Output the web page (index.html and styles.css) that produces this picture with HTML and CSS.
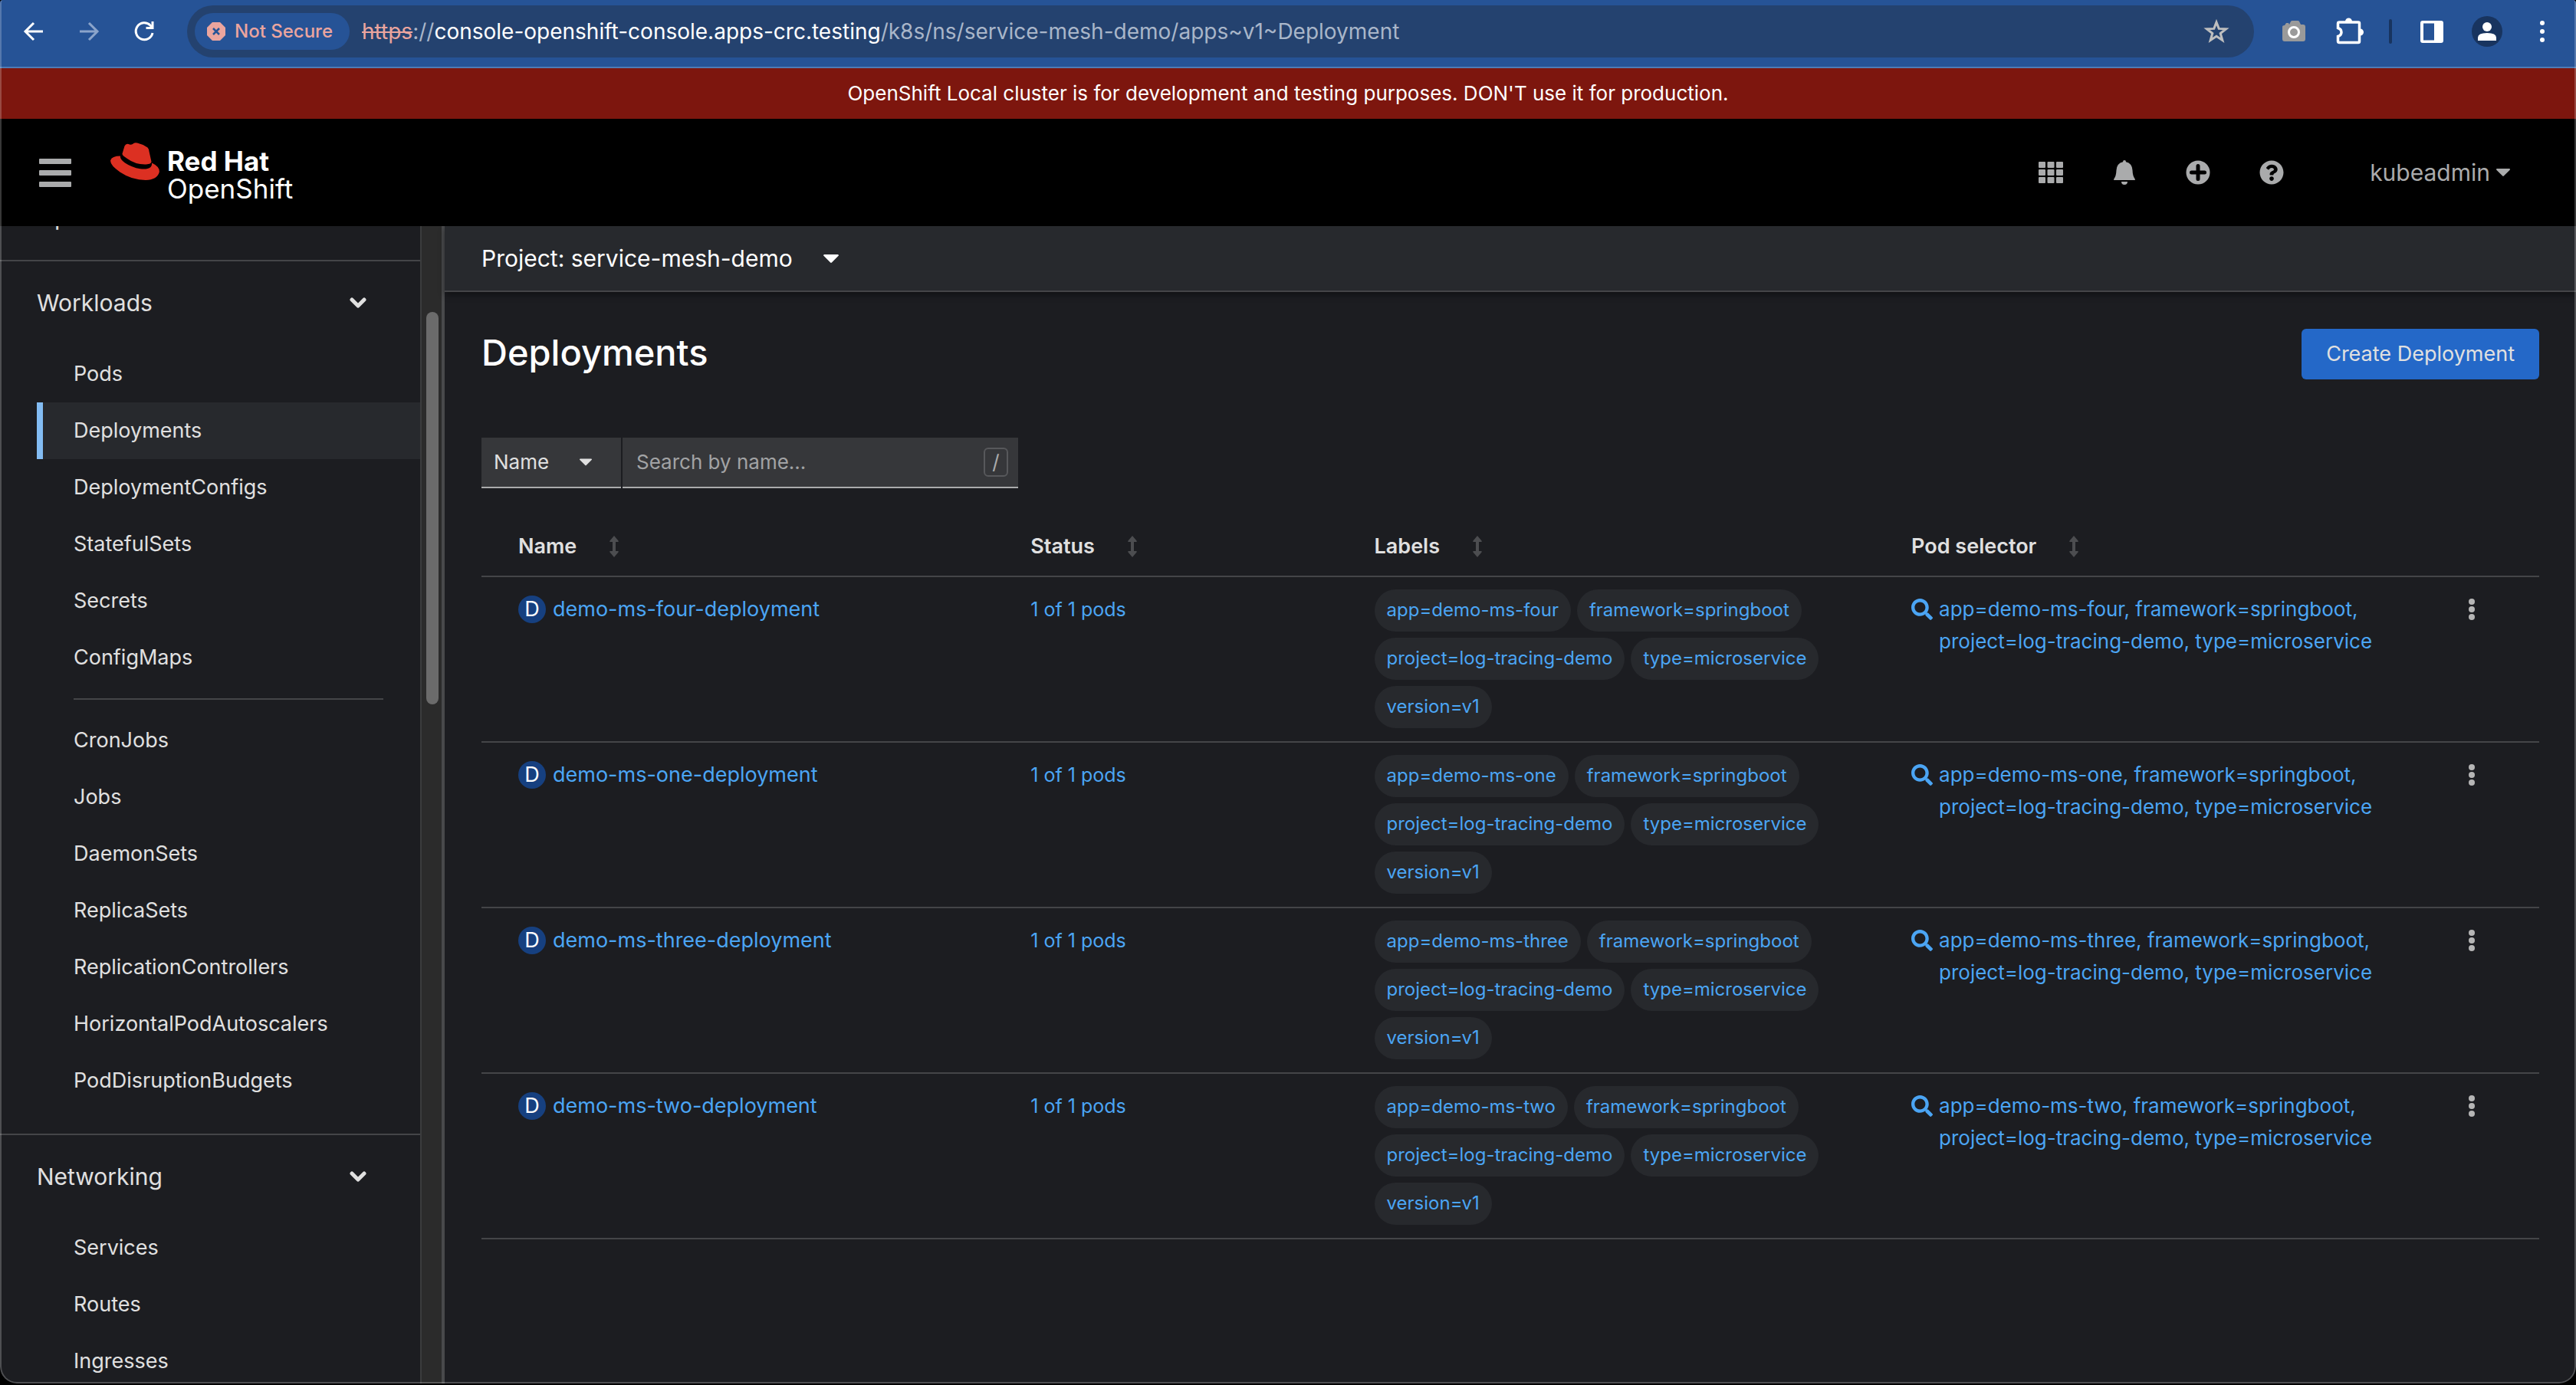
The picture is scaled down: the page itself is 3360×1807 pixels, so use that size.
FILE: index.html
```html
<!DOCTYPE html>
<html lang="en">
<head>
<meta charset="utf-8">
<title>Deployments · Red Hat OpenShift</title>
<link rel="stylesheet" href="styles.css">
</head>
<body>
<svg class="sprite" aria-hidden="true">
  <symbol id="caret" viewBox="0 0 18 10"><path d="M1 0h16a1 1 0 0 1 .7 1.700L9.800 9.600a1.200 1.200 0 0 1-1.600 0L.3 1.700A1 1 0 0 1 1 0z"/></symbol>
  <symbol id="chevron" viewBox="0 0 22 14"><path d="M3 3l8 8 8-8" fill="none" stroke="currentColor" stroke-width="5" stroke-linecap="round" stroke-linejoin="round"/></symbol>
  <symbol id="sort" viewBox="0 0 14 28"><path d="M7 0l5.500 6.500q1 1.500-.5 1.500H9v12h3q1.500 0 .5 1.500L7 28l-5.500-6.500Q.5 20 2 20h3V8H2Q.5 8 1.500 6.500z"/></symbol>
  <symbol id="kebab" viewBox="0 0 10 28"><circle cx="5" cy="4" r="4"/><circle cx="5" cy="14" r="4"/><circle cx="5" cy="24" r="4"/></symbol>
  <symbol id="search" viewBox="0 0 512 512"><path d="M505 442.700L405.300 343c-4.500-4.500-10.600-7-17-7H372c27.600-35.300 44-79.700 44-128C416 93.100 322.900 0 208 0S0 93.100 0 208s93.100 208 208 208c48.300 0 92.700-16.400 128-44v16.300c0 6.400 2.500 12.500 7 17l99.700 99.700c9.400 9.400 24.600 9.400 33.900 0l28.300-28.300c9.400-9.400 9.400-24.600.1-34zM208 336c-70.700 0-128-57.200-128-128 0-70.700 57.200-128 128-128 70.700 0 128 57.200 128 128 0 70.700-57.200 128-128 128z"/></symbol>
</svg>

<div class="window">
  <div class="toolbar">
    <button class="tool" aria-label="Back"><svg width="32" height="32" viewBox="0 0 32 32"><path d="M28 16H6M16 5L5 16l11 11" fill="none" stroke="currentColor" stroke-width="3"/></svg></button>
    <button class="tool tool-off" aria-label="Forward"><svg width="32" height="32" viewBox="0 0 32 32"><path d="M4 16h22M16 5l11 11-11 11" fill="none" stroke="currentColor" stroke-width="3"/></svg></button>
    <button class="tool" aria-label="Reload"><svg width="32" height="32" viewBox="0 0 32 32"><path d="M27 18a11 11 0 1 1-3-10l3 3" fill="none" stroke="currentColor" stroke-width="3"/><path d="M28.500 3v10h-10v-3h7V3z"/></svg></button>
    <div class="omnibox">
      <button class="security"><svg width="24" height="24" viewBox="0 0 24 24"><path d="M7 0h10l7 7v10l-7 7H7l-7-7V7z"/><path d="M8 8l8 8M16 8l-8 8" stroke="#265396" stroke-width="2.500"/></svg>Not Secure</button>
      <span class="url"><s>https</s>://<b>console-openshift-console.apps-crc.testing</b>/k8s/ns/service-mesh-demo/apps~v1~Deployment</span>
      <button class="tool star" aria-label="Bookmark"><svg width="34" height="32" viewBox="0 0 34 32"><path d="M17 4l3.200 8.400 9.300.4-7.300 5.700 2.600 9-7.800-5.200-7.800 5.200 2.600-9-7.300-5.700 9.300-.4z" fill="none" stroke="currentColor" stroke-width="3"/></svg></button>
    </div>
    <div class="extensions">
      <button class="tool" aria-label="Screenshot"><svg width="40" height="40" viewBox="0 0 40 40"><path d="M8 12l2-3h3l1 2 2-4q.5-1 2-1h7q1.500 0 2 1l2 4h3q3 0 3 3v16q0 3-3 3H8q-3 0-3-3V14q0-2 3-2z" fill="#9a9a9a"/><circle cx="20" cy="21" r="6.500" fill="#9a9a9a" stroke="#fff" stroke-width="3"/></svg></button>
      <button class="tool" aria-label="Extensions"><svg width="40" height="40" viewBox="0 0 40 40"><path d="M7 8h25q1.500 0 1.500 1.500V33q0 1.500-1.500 1.500H7q-1.500 0-1.500-1.500v-6.500q4.500-1.500 4.500-5.500t-4.500-5.500v-6Q5.500 8 7 8z" fill="none" stroke="currentColor" stroke-width="3.500"/><path d="M15 7a4.500 4.500 0 0 1 9 0zM34.500 16.500a4.500 4.500 0 0 1 0 9z"/></svg></button>
      <span class="divider"></span>
      <button class="tool" aria-label="Side panel"><svg width="40" height="40" viewBox="0 0 40 40"><path d="M8 6h24q3 0 3 3v23q0 3-3 3H8q-3 0-3-3V9q0-3 3-3zm1 3.500v22h14v-22z" fill-rule="evenodd"/></svg></button>
      <button class="tool" aria-label="Profile"><svg width="40" height="40" viewBox="0 0 40 40"><circle cx="20" cy="20" r="20" fill="#18345f"/><circle cx="20" cy="14" r="6"/><path d="M8 32v-4q0-6 12-6t12 6v4z"/></svg></button>
      <button class="tool" aria-label="Menu"><svg width="8" height="40" viewBox="0 0 8 40"><circle cx="4" cy="9" r="3"/><circle cx="4" cy="20" r="3"/><circle cx="4" cy="31" r="3"/></svg></button>
    </div>
  </div>

  <div class="banner">OpenShift Local cluster is for development and testing purposes. DON'T use it for production.</div>

  <header class="masthead">
    <button class="burger" aria-label="Toggle navigation"><svg width="42" height="38" viewBox="0 0 42 38"><rect y="1" width="42" height="7" rx="1"/><rect y="16" width="42" height="7" rx="1"/><rect y="31" width="42" height="7" rx="1"/></svg></button>
    <a class="brand" href="#">
      <svg width="64" height="50" viewBox="0 0 64 50"><path d="M18.500 4.500Q20.500.500 25 2.500q2 .5 4-.5 2-2.500 6-1.500 7 1.500 13.500 6 1.500 1.500 2 5L53.500 25q0 3-7 3.500Q33 29 22 21q-7-4-6.500-6.500z" fill="#dc3022"/><path d="M13 17.500q-1 4 6 9 9 6 20 7.800 9 1.200 13.500-2.300 2-2 1.500-5.500Q64.500 31.500 63.800 38.500 61 48.500 46 49 28 49 12.500 38.500-1 29 .2 23 2 17.500 13 17.500z" fill="#dc3022"/></svg>
      <span class="wordmark"><b>Red Hat</b><span>OpenShift</span></span>
    </a>
    <nav class="masthead-tools" aria-label="Tools">
      <button class="icon-btn" aria-label="Applications"><svg width="32" height="32" viewBox="0 0 32 32"><g><rect y="2" width="9" height="8" rx="1"/><rect x="11.500" y="2" width="9" height="8" rx="1"/><rect x="23" y="2" width="9" height="8" rx="1"/><rect y="12" width="9" height="8" rx="1"/><rect x="11.500" y="12" width="9" height="8" rx="1"/><rect x="23" y="12" width="9" height="8" rx="1"/><rect y="22" width="9" height="8" rx="1"/><rect x="11.500" y="22" width="9" height="8" rx="1"/><rect x="23" y="22" width="9" height="8" rx="1"/></g></svg></button>
      <button class="icon-btn" aria-label="Notifications"><svg width="32" height="32" viewBox="0 0 32 32"><path d="M16 0q2 0 2 2.200Q26 4 26.500 13q.3 8 3.200 11.500 1 1.500-.7 1.500H3q-1.700 0-.7-1.500Q5.200 21 5.500 13 6 4 14 2.200 14 0 16 0zM12 28h8a4 4 0 0 1-8 0z"/></svg></button>
      <button class="icon-btn" aria-label="Add"><svg width="32" height="32" viewBox="0 0 32 32"><circle cx="16" cy="16" r="15.500"/><path d="M16 7.500v17M7.500 16h17" stroke="#000" stroke-width="5" stroke-linecap="round"/></svg></button>
      <button class="icon-btn" aria-label="Help"><svg width="32" height="32" viewBox="0 0 512 512"><path d="M504 256c0 137-111 248-248 248S8 393 8 256C8 119 119 8 256 8s248 111 248 248zM262.700 90c-54.500 0-89.300 23-116.600 63.800-3.500 5.300-2.400 12.400 2.700 16.200l34.700 26.300c5.200 4 12.600 3 16.700-2.100 17.900-22.700 30.100-35.800 57.300-35.800 20.400 0 45.700 13.200 45.700 33 0 15-12.400 22.700-32.500 34C247.100 238.500 216 254.900 216 296v4c0 6.600 5.400 12 12 12h56c6.600 0 12-5.400 12-12v-1.300c0-28.500 83.200-29.700 83.200-106.700 0-58-60.200-102-116.500-102zM256 338c-25.400 0-46 20.600-46 46s20.600 46 46 46 46-20.600 46-46-20.600-46-46-46z"/></svg></button>
      <button class="user">kubeadmin<svg width="18" height="10"><use href="#caret"/></svg></button>
    </nav>
  </header>

  <div class="body">
    <aside class="sidebar">
      <nav class="nav" aria-label="Main">
        <section><button class="nav-head">Operators<svg width="22" height="14"><use href="#chevron"/></svg></button></section>
        <section>
          <button class="nav-head">Workloads<svg width="22" height="14"><use href="#chevron"/></svg></button>
          <ul>
            <li><a href="#">Pods</a></li>
            <li class="current"><a href="#" aria-current="page">Deployments</a></li>
            <li><a href="#">DeploymentConfigs</a></li>
            <li><a href="#">StatefulSets</a></li>
            <li><a href="#">Secrets</a></li>
            <li><a href="#">ConfigMaps</a></li>
            <li class="rule"></li>
            <li><a href="#">CronJobs</a></li>
            <li><a href="#">Jobs</a></li>
            <li><a href="#">DaemonSets</a></li>
            <li><a href="#">ReplicaSets</a></li>
            <li><a href="#">ReplicationControllers</a></li>
            <li><a href="#">HorizontalPodAutoscalers</a></li>
            <li><a href="#">PodDisruptionBudgets</a></li>
          </ul>
        </section>
        <section>
          <button class="nav-head">Networking<svg width="22" height="14"><use href="#chevron"/></svg></button>
          <ul>
            <li><a href="#">Services</a></li>
            <li><a href="#">Routes</a></li>
            <li><a href="#">Ingresses</a></li>
          </ul>
        </section>
      </nav>
      <div class="track"><div class="thumb"></div></div>
    </aside>

    <main class="main">
      <div class="project-bar"><button class="project">Project: service-mesh-demo<svg width="20" height="11"><use href="#caret"/></svg></button></div>
      <div class="content">
        <div class="title-row">
          <h1>Deployments</h1>
          <button class="create">Create Deployment</button>
        </div>
        <form class="filter">
          <div class="picker">
            <select aria-label="Filter by"><option>Name</option></select>
            <svg width="16" height="10"><use href="#caret"/></svg>
          </div>
          <label class="search"><input type="text" placeholder="Search by name..." aria-label="Search by name"><kbd>/</kbd></label>
        </form>
        <table class="grid">
          <colgroup><col class="c-name"><col class="c-status"><col class="c-labels"><col class="c-pods"><col class="c-menu"></colgroup>
          <thead>
            <tr>
              <th><button>Name<svg width="14" height="28"><use href="#sort"/></svg></button></th>
              <th><button>Status<svg width="14" height="28"><use href="#sort"/></svg></button></th>
              <th><button>Labels<svg width="14" height="28"><use href="#sort"/></svg></button></th>
              <th><button>Pod selector<svg width="14" height="28"><use href="#sort"/></svg></button></th>
              <td></td>
            </tr>
          </thead>
          <tbody>
            <tr>
              <td><div class="res"><span class="badge">D</span><a href="#">demo-ms-four-deployment</a></div></td>
              <td><a class="status" href="#">1 of 1 pods</a></td>
              <td><div class="chips"><a href="#">app=demo-ms-four</a><a href="#">framework=springboot</a><a href="#">project=log-tracing-demo</a><a href="#">type=microservice</a><a href="#">version=v1</a></div></td>
              <td><a class="selector" href="#"><svg width="28" height="28"><use href="#search"/></svg><span><i>app=demo-ms-four,</i> <i>framework=springboot,</i> <i>project=log-tracing-demo,</i> <i>type=microservice</i></span></a></td>
              <td><button class="kebab" aria-label="Actions"><svg width="10" height="28"><use href="#kebab"/></svg></button></td>
            </tr>
            <tr>
              <td><div class="res"><span class="badge">D</span><a href="#">demo-ms-one-deployment</a></div></td>
              <td><a class="status" href="#">1 of 1 pods</a></td>
              <td><div class="chips"><a href="#">app=demo-ms-one</a><a href="#">framework=springboot</a><a href="#">project=log-tracing-demo</a><a href="#">type=microservice</a><a href="#">version=v1</a></div></td>
              <td><a class="selector" href="#"><svg width="28" height="28"><use href="#search"/></svg><span><i>app=demo-ms-one,</i> <i>framework=springboot,</i> <i>project=log-tracing-demo,</i> <i>type=microservice</i></span></a></td>
              <td><button class="kebab" aria-label="Actions"><svg width="10" height="28"><use href="#kebab"/></svg></button></td>
            </tr>
            <tr>
              <td><div class="res"><span class="badge">D</span><a href="#">demo-ms-three-deployment</a></div></td>
              <td><a class="status" href="#">1 of 1 pods</a></td>
              <td><div class="chips"><a href="#">app=demo-ms-three</a><a href="#">framework=springboot</a><a href="#">project=log-tracing-demo</a><a href="#">type=microservice</a><a href="#">version=v1</a></div></td>
              <td><a class="selector" href="#"><svg width="28" height="28"><use href="#search"/></svg><span><i>app=demo-ms-three,</i> <i>framework=springboot,</i> <i>project=log-tracing-demo,</i> <i>type=microservice</i></span></a></td>
              <td><button class="kebab" aria-label="Actions"><svg width="10" height="28"><use href="#kebab"/></svg></button></td>
            </tr>
            <tr>
              <td><div class="res"><span class="badge">D</span><a href="#">demo-ms-two-deployment</a></div></td>
              <td><a class="status" href="#">1 of 1 pods</a></td>
              <td><div class="chips"><a href="#">app=demo-ms-two</a><a href="#">framework=springboot</a><a href="#">project=log-tracing-demo</a><a href="#">type=microservice</a><a href="#">version=v1</a></div></td>
              <td><a class="selector" href="#"><svg width="28" height="28"><use href="#search"/></svg><span><i>app=demo-ms-two,</i> <i>framework=springboot,</i> <i>project=log-tracing-demo,</i> <i>type=microservice</i></span></a></td>
              <td><button class="kebab" aria-label="Actions"><svg width="10" height="28"><use href="#kebab"/></svg></button></td>
            </tr>
          </tbody>
        </table>
      </div>
    </main>
  </div>
</div>
</body>
</html>
```

FILE: styles.css
```css
:root {
  --bg: #1c1d21;
  --raised: #27292d;
  --line: #444548;
  --text: #e0e0e0;
  --muted: #aaabac;
  --link: #4ba5f4;
}

* { box-sizing: border-box; }

body {
  margin: 0;
  background: #000;
  color: var(--text);
  font-family: Inter, "Liberation Sans", sans-serif;
  font-size: 26px;
  line-height: 42px;
}

button, input, select, kbd {
  margin: 0;
  padding: 0;
  border: 0;
  background: none;
  color: inherit;
  font: inherit;
}

a { color: inherit; text-decoration: none; }
svg { display: block; flex: none; fill: currentColor; }
ul { margin: 0; padding: 0; list-style: none; }
.sprite { position: absolute; width: 0; height: 0; }

.window {
  position: relative;
  display: flex;
  flex-direction: column;
  height: calc(100vh - 2px);
  overflow: hidden;
  border-radius: 4px 4px 22px 22px;
  background: var(--bg);
}

/* hairline frame drawn over the whole window */
.window::after {
  content: "";
  position: absolute;
  inset: 0;
  border: 2px solid rgba(255, 255, 255, .22);
  border-top: 0;
  border-radius: inherit;
  pointer-events: none;
}

/* Browser toolbar */
.toolbar {
  display: flex;
  align-items: center;
  flex: none;
  height: 89px;
  padding: 0 40px 6px 28px;
  border-bottom: 2px solid #4f7bb4;
  background: #265396;
  color: #fff;
}

.tool { margin-right: 40px; }
.tool-off { color: #8ba4cb; }

.omnibox {
  display: flex;
  align-items: center;
  flex: 1;
  height: 68px;
  padding: 0 32px 0 10px;
  border-radius: 34px;
  background: #24426f;
}

.security {
  display: flex;
  align-items: center;
  gap: 12px;
  height: 48px;
  padding: 0 22px 0 16px;
  border-radius: 24px;
  background: #265396;
  color: #eba59e;
  font-size: 24px;
  font-weight: 500;
}

.url { flex: 1; margin-left: 16px; color: #a9b6c9; font-size: 28px; white-space: nowrap; }
.url s { color: #eba59e; }
.url b { color: #fff; font-weight: 400; }
.star { margin: 0; color: #bfbfbf; }

.extensions { display: flex; align-items: center; margin-left: 32px; }
.extensions .tool { margin-right: 32px; }
.extensions .tool:last-child { margin: 0 0 0 16px; }
.divider { width: 4px; height: 32px; margin-right: 32px; border-radius: 2px; background: #18345f; }

/* Cluster notice */
.banner {
  flex: none;
  height: 66px;
  padding: 12px;
  background: #7d160e;
  color: #fff;
  text-align: center;
}

/* Masthead */
.masthead {
  display: flex;
  align-items: center;
  flex: none;
  height: 140px;
  padding: 0 86px 0 51px;
  background: #000;
  color: var(--muted);
}

.brand { display: flex; align-items: flex-start; gap: 10px; margin-left: 51px; color: #fff; }
.wordmark { display: grid; padding-top: 6px; font-size: 35px; line-height: 36px; }
.masthead-tools { display: flex; align-items: center; gap: 64px; margin-left: auto; }
.user { display: flex; align-items: center; gap: 8px; margin-left: 48px; font-size: 30px; }

.body { display: flex; flex: 1; min-height: 0; }

/* Sidebar */
.sidebar { display: flex; flex: none; width: 580px; overflow: hidden; font-size: 27px; }

/* the list is scrolled part of the way down */
.nav { flex: 1; margin-top: -66px; }
.nav section { border-bottom: 2px solid var(--line); }
.nav ul { padding-bottom: 32px; }

.nav-head {
  display: flex;
  align-items: center;
  justify-content: space-between;
  width: 100%;
  height: 110px;
  padding: 0 70px 2px 48px;
  font-size: 30px;
}

.nav li { padding-left: 48px; }
.nav li a { display: block; padding: 16px 0 16px 48px; }
.nav li.current a { padding-left: 40px; border-left: 8px solid #83bcf3; background: var(--raised); }
.nav li.rule { height: 2px; margin: 16px 48px 16px 96px; padding: 0; background: var(--line); }

.track {
  width: 32px;
  padding: 112px 6px 0;
  border: 2px solid #3b3c3d;
  border-right: 4px solid #48494b;
  border-width: 0 4px 0 2px;
  background: #2b2b2b;
}

.thumb { width: 16px; height: 512px; margin: 0 auto; border-radius: 8px; background: #6b6b6b; }

/* Main area */
.main { flex: 1; min-width: 0; }

.project-bar {
  display: flex;
  align-items: center;
  height: 86px;
  padding: 0 48px;
  border-bottom: 2px solid var(--line);
  background: var(--raised);
  box-shadow: 0 4px 8px rgba(0, 0, 0, .4);
  color: #fff;
}

.project { display: flex; align-items: center; gap: 40px; font-size: 30px; }
.content { padding: 48px; }
.title-row { display: flex; align-items: flex-start; justify-content: space-between; }
h1 { margin: 0; color: #fff; font-size: 47px; font-weight: 500; line-height: 62px; }

.create {
  height: 66px;
  padding: 0 32px;
  border-radius: 6px;
  background: #2468c8;
  color: var(--text);
  font-size: 27px;
}

.filter { display: flex; gap: 2px; margin-top: 76px; }
.picker, .search { height: 66px; border-bottom: 2px solid var(--muted); background: #36373a; }
.picker { display: grid; align-items: center; width: 182px; }
.picker > * { grid-area: 1 / 1; }
.picker select { width: 100%; height: 64px; padding-left: 16px; appearance: none; }
.picker svg { justify-self: end; margin-right: 38px; pointer-events: none; }
.search { display: flex; align-items: center; width: 516px; padding: 0 13px 0 18px; }
.search input { flex: 1; min-width: 0; outline: 0; }
.search input::placeholder { color: #a2a3a5; opacity: 1; }
.search kbd {
  width: 32px;
  height: 38px;
  border: 2px solid #57585b;
  border-radius: 6px;
  color: var(--muted);
  line-height: 34px;
  text-align: center;
}

/* Deployments table */
.grid { width: 100%; margin-top: 39px; border-collapse: collapse; table-layout: fixed; }
.c-name { width: 24.9%; }
.c-status { width: 16.7%; }
.c-labels { width: 26.1%; }
.c-menu { width: 5%; }
.grid tr { border-bottom: 2px solid var(--line); }
.grid th, .grid td { padding: 0 0 0 48px; text-align: left; vertical-align: top; }
.grid thead tr { height: 76px; }
.grid th button { display: flex; align-items: center; gap: 42px; height: 74px; font-size: 27px; font-weight: 600; }
.grid th svg { color: #4c4d50; }
.grid tbody tr { height: 216px; }
.grid tbody td { padding-top: 21px; color: var(--link); }
.grid tbody td:nth-child(3) { padding-top: 16px; }
.grid tbody td:last-child { padding-left: 38px; }

.res { display: flex; align-items: center; gap: 9px; font-size: 27px; }
.badge {
  width: 36px;
  height: 36px;
  border-radius: 50%;
  background: #164080;
  color: #fff;
  line-height: 36px;
  text-align: center;
}

.status { font-size: 25px; }
.chips { display: flex; flex-wrap: wrap; gap: 8px; font-size: 24px; }
.chips a { height: 55px; padding: 0 16px; border-radius: 28px; background: var(--raised); line-height: 54px; }
.selector { display: flex; gap: 8px; }
.selector svg { margin-top: 7px; }
.selector i { font-style: normal; white-space: nowrap; }
.kebab { width: 16px; padding: 7px 3px; color: #b5b5b5; }
```
